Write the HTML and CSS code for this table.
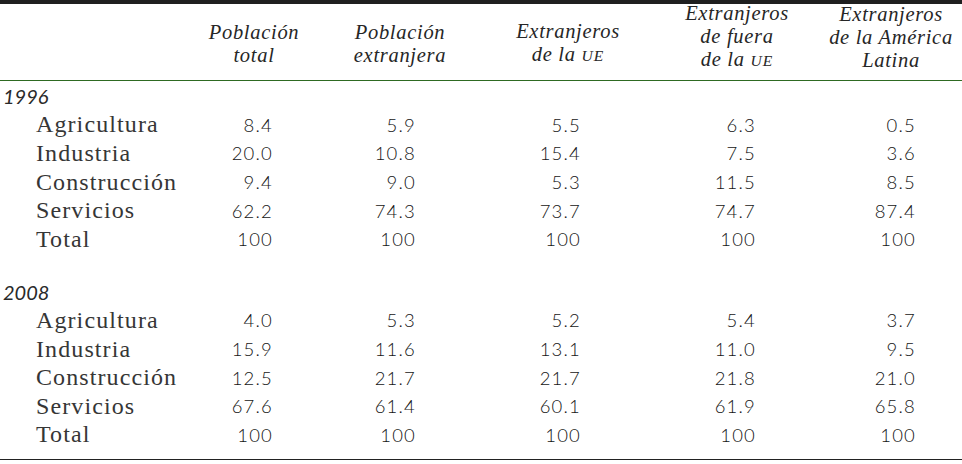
FILE: index.html
```html
<!DOCTYPE html>
<html lang="es">
<head>
<meta charset="utf-8">
<title>Tabla</title>
<link rel="stylesheet" href="styles.css">
</head>
<body>
<div class="table">
  <div class="row head">
    <div class="hc"></div>
    <div class="hc two"><span>Población</span><span>total</span></div>
    <div class="hc two"><span>Población</span><span>extranjera</span></div>
    <div class="hc two"><span>Extranjeros</span><span>de la <span class="sc">ue</span></span></div>
    <div class="hc three"><span>Extranjeros</span><span>de fuera</span><span>de la <span class="sc">ue</span></span></div>
    <div class="hc three"><span>Extranjeros</span><span>de la América</span><span>Latina</span></div>
  </div>
  <div class="section">
    <div class="row"><div class="year">1996</div></div>
    <div class="row"><div class="label">Agricultura</div><div class="n">8.4</div><div class="n">5.9</div><div class="n">5.5</div><div class="n">6.3</div><div class="n">0.5</div></div>
    <div class="row"><div class="label">Industria</div><div class="n">20.0</div><div class="n">10.8</div><div class="n">15.4</div><div class="n">7.5</div><div class="n">3.6</div></div>
    <div class="row"><div class="label">Construcción</div><div class="n">9.4</div><div class="n">9.0</div><div class="n">5.3</div><div class="n">11.5</div><div class="n">8.5</div></div>
    <div class="row"><div class="label">Servicios</div><div class="n">62.2</div><div class="n">74.3</div><div class="n">73.7</div><div class="n">74.7</div><div class="n">87.4</div></div>
    <div class="row"><div class="label">Total</div><div class="n">100</div><div class="n">100</div><div class="n">100</div><div class="n">100</div><div class="n">100</div></div>
  </div>
  <div class="section second">
    <div class="row"><div class="year">2008</div></div>
    <div class="row"><div class="label">Agricultura</div><div class="n">4.0</div><div class="n">5.3</div><div class="n">5.2</div><div class="n">5.4</div><div class="n">3.7</div></div>
    <div class="row"><div class="label">Industria</div><div class="n">15.9</div><div class="n">11.6</div><div class="n">13.1</div><div class="n">11.0</div><div class="n">9.5</div></div>
    <div class="row"><div class="label">Construcción</div><div class="n">12.5</div><div class="n">21.7</div><div class="n">21.7</div><div class="n">21.8</div><div class="n">21.0</div></div>
    <div class="row"><div class="label">Servicios</div><div class="n">67.6</div><div class="n">61.4</div><div class="n">60.1</div><div class="n">61.9</div><div class="n">65.8</div></div>
    <div class="row"><div class="label">Total</div><div class="n">100</div><div class="n">100</div><div class="n">100</div><div class="n">100</div><div class="n">100</div></div>
  </div>
</div>
</body>
</html>
```
FILE: styles.css
```css
html, body {
  margin: 0;
  padding: 0;
  background: #ffffff;
}
body {
  width: 962px;
  height: 464px;
  overflow: hidden;
  color: #222222;
  font-family: "Liberation Serif", "Times New Roman", serif;
}
.table {
  width: 962px;
  border-top: 4px solid #1f1f1f;
  border-bottom: 1px solid #222222;
  padding-bottom: 10px;
}
.row {
  display: grid;
  grid-template-columns: 190px 128px 164px 172px 166px 142px;
  height: 28.6px;
  align-items: center;
}
.row.head {
  height: 76px;
  grid-template-rows: 76px;
  align-items: end;
  border-bottom: 1px solid #2e6a22;
}
.hc {
  display: flex;
  flex-direction: column;
  align-items: center;
  font-style: italic;
  font-size: 20.5px;
  letter-spacing: 0.7px;
  line-height: 23px;
  white-space: nowrap;
  color: #262626;
}
.hc.two {
  padding-bottom: 13px;
}
.hc.three {
  padding-bottom: 8px;
}
.sc {
  font-size: 0.76em;
  text-transform: uppercase;
  letter-spacing: 1px;
}
.section {
  padding-top: 1px;
}
.section.second {
  padding-top: 24px;
}
.year {
  font-family: "Lato", sans-serif;
  font-style: italic;
  font-weight: 400;
  font-size: 20px;
  padding-left: 3px;
  color: #2a2a2a;
}
.label {
  font-size: 24px;
  letter-spacing: 1.1px;
  padding-left: 36px;
  white-space: nowrap;
  color: #363636;
}
.n {
  font-family: "Lato", sans-serif;
  font-weight: 300;
  color: #151515;
  font-size: 18.5px;
  letter-spacing: 1.2px;
  text-align: right;
}
.n:nth-child(2) { padding-right: 45px; }
.n:nth-child(3) { padding-right: 66px; }
.n:nth-child(4) { padding-right: 73px; }
.n:nth-child(5) { padding-right: 64px; }
.n:nth-child(6) { padding-right: 46px; }
```
